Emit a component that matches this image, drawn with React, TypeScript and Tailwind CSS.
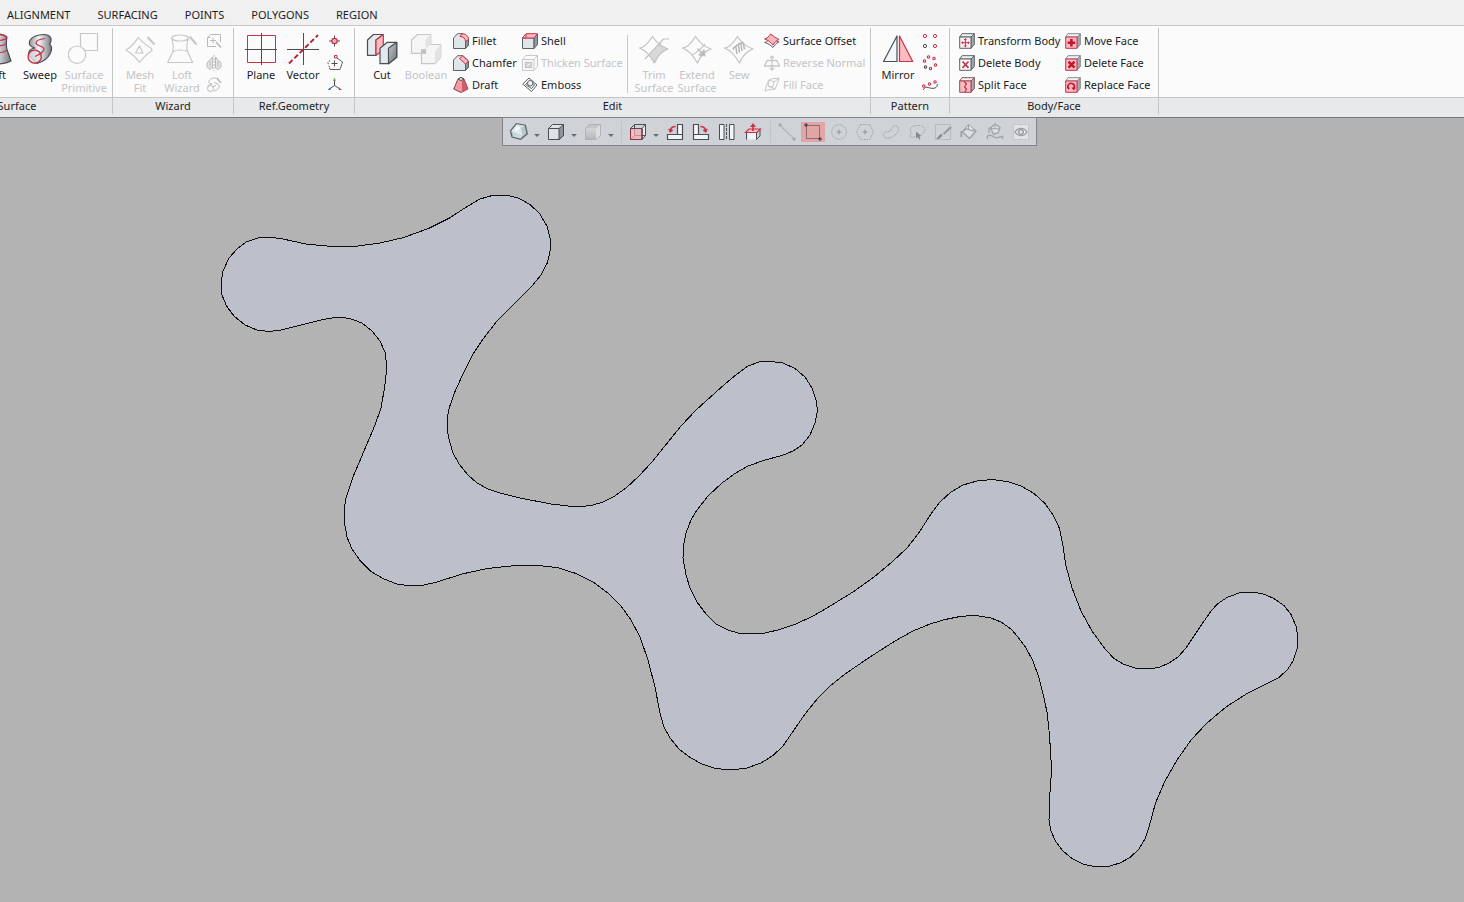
import type { ReactNode } from "react";

const DARK = "#4a4e54";
const SOFT = "#5c6167";
const RED = "#c9304a";
const PINK = "#fbbcc0";
const OFF = "#c6c7c9";

function Big({ children }: { children: ReactNode }) {
  return (
    <svg viewBox="0 0 32 32" className="h-8 w-8 shrink-0" fill="none" strokeWidth="1.2" strokeLinejoin="round" aria-hidden="true">
      <defs>
        <linearGradient id="steel" x1="0" x2="1">
          <stop offset="0" stopColor="#8b8f94" />
          <stop offset="0.45" stopColor="#f4f5f6" />
          <stop offset="1" stopColor="#777b80" />
        </linearGradient>
        <linearGradient id="side" x1="0" y1="0" x2="1" y2="1">
          <stop offset="0" stopColor="#c3cace" />
          <stop offset="1" stopColor="#6d767c" />
        </linearGradient>
      </defs>
      {children}
    </svg>
  );
}

function Small({ children }: { children: ReactNode }) {
  return (
    <svg viewBox="0 0 16 16" className="h-4 w-4 shrink-0" fill="none" strokeWidth="1" strokeLinejoin="round" aria-hidden="true">
      {children}
    </svg>
  );
}

function Tool({ children }: { children: ReactNode }) {
  return (
    <svg viewBox="0 0 20 20" className="h-5 w-5 shrink-0" fill="none" strokeWidth="1" aria-hidden="true">
      {children}
    </svg>
  );
}

/* Large ribbon icons */

const LoftIcon = () => (
  <Big>
    <path d="M6 4C8 10 6 15 5 18L1 28C8 32 24 32 31 28L27.5 18C26 14 26 9 27 4C22 0 11 0 6 4Z" fill="url(#steel)" stroke={DARK} />
    <ellipse cx="16.5" cy="4.5" rx="10" ry="3" stroke={RED} />
    <path d="M5.5 17C11 21 22 21 27 17M6 11C12 14 21 14 26.5 10.5" stroke={RED} />
  </Big>
);

const SweepIcon = () => (
  <Big>
    <path
      d="M4.5 22C4 17 8 15.500 11 15C7 14 4.500 12 5.500 8.500C7 4 14 1.500 20 1.500C25 1.500 27.500 4 27 7.500C27 9 26.500 10 25.500 11C28 13 28 17 26 21C23.500 26 18 29 13 30.500Z"
      fill="url(#steel)"
      stroke={DARK}
    />
    <circle cx="10.700" cy="23.700" r="6.600" fill="#dfe1e3" fillOpacity="0.800" stroke={RED} strokeWidth="1.400" />
    <path d="M11 23.500C16 21 20 19 20 16C20 13 12 13 12 10C12 7 17 6 21 5.500" stroke={RED} />
  </Big>
);

const PrimitiveIcon = () => (
  <Big>
    <g stroke={OFF} fill="#fbfbfb">
      <rect x="12.500" y="0.500" width="17" height="17" />
      <circle cx="9" cy="21.700" r="8.700" />
    </g>
  </Big>
);

const MeshFitIcon = () => (
  <Big>
    <g stroke={OFF}>
      <path d="M2 17C7 15 11 9 14.500 4.500C17 8 20 11 27.500 15.500L28 18C23 20 19 25 15.500 29.500C12 24 8 21 2 17Z" />
      <path d="M15.500 13L19 20H11.500Z" />
      <path d="M23.500 4L30.500 11.500" strokeWidth="2" />
    </g>
  </Big>
);

const LoftWizardIcon = () => (
  <Big>
    <g stroke={OFF}>
      <ellipse cx="14" cy="5" rx="8.300" ry="3" />
      <path d="M5.700 5C7.500 10 7.500 15 7 18.500L1.700 29.500H26.700L21.500 18.500C20.500 14 21 9 22.300 5M7 18.500C11 16.500 18 16.500 21.500 18.500" />
      <path d="M23.500 3.500L30.500 11.500" strokeWidth="2" />
    </g>
  </Big>
);

const PlaneIcon = () => (
  <Big>
    <g strokeWidth="1">
      <rect x="2.500" y="2.500" width="28" height="27" stroke={RED} />
      <path d="M16.500 0V32M0 16.500H32" stroke={DARK} />
    </g>
  </Big>
);

const VectorIcon = () => (
  <Big>
    <path d="M16.500 0V32M0 16.500H32" stroke={DARK} strokeWidth="1" />
    <path d="M2 30.500L31 2" stroke="#b52640" strokeWidth="1.900" strokeDasharray="5 2.500" />
  </Big>
);

const CutIcon = () => (
  <Big>
    <path d="M1.500 7L7.500 1.500H17.300L10 7V22.300H1.500Z" fill="#e4eaed" stroke={DARK} />
    <path d="M10 7L17.300 1.500V17L10 22.300Z" fill={PINK} stroke={RED} />
    <path d="M14 15.300L21.300 9.300H30.700V24.300L22.500 30.700H14Z" fill="#e1e9ed" stroke={DARK} />
    <path d="M22.500 15.300L30.700 9.300V24.300L22.500 30.700Z" fill="url(#side)" stroke={DARK} />
  </Big>
);

const BooleanIcon = () => (
  <Big>
    <g stroke={OFF}>
      <path d="M1.500 7L7.500 1.500H20.700V11.500H30.700V24L25 30.700H11.500V20.300H1.500Z" fill="#f5f5f6" />
      <path d="M15.500 7L20.700 1.500V11.500L15.500 16.500ZM25 18L30.700 11.500V24L25 30.700Z" fill="#e2e3e4" stroke="none" />
      <path d="M11.500 16.500h4v4h-4z" fill="#bfc0c2" />
    </g>
  </Big>
);

const SHEET = "M1.500 15C6 15 11 9 14.500 3.500C18 9 24 14 30 16C24 18 19 24 16.500 30C13 24 7 17 1.500 15Z";

const TrimIcon = () => (
  <Big>
    <g stroke="#c0c1c3">
      <path d={SHEET} />
      <path d="M7 26L25.500 6H31" />
      <path d="M12 21V24M14 19V27M16 17V30M18 15V27M20 12V24M22 10V21M24 13V19M26 13.500V18M28 15V17" />
    </g>
  </Big>
);

const ExtendIcon = () => (
  <Big>
    <g stroke="#c0c1c3">
      <path d={SHEET} />
      <path d="M24 11C20 16 15 20 11 22" />
      <path d="M16.500 15.500L22.500 21.500" strokeWidth="1.500" />
      <path d="M24 23L18 22L23 17Z" fill="#b9babc" />
    </g>
  </Big>
);

const SewIcon = () => (
  <Big>
    <g stroke="#c0c1c3">
      <path d={SHEET} />
      <path d="M10.500 17C10 14 12 13 13 15L14 21M13 15C12.500 12 14.500 11 15.500 13L16.500 19.500M15.500 13C15 10 17 9.500 18 12L19 18M18 12C17.500 9 19.500 8.500 20.500 11L21.500 16.500" stroke="#b4b5b7" strokeWidth="1.500" />
    </g>
  </Big>
);

const MirrorIcon = () => (
  <Big>
    <path d="M1.500 28.500L15 3V28.500Z" fill="#f1f8f9" stroke={DARK} />
    <path d="M17.500 3V28.500H30.700Z" fill={PINK} stroke={RED} />
  </Big>
);

/* Small ribbon icons */

const MeshToolIcon = () => (
  <Small>
    <g stroke="#b9babc">
      <path d="M14.500 9V1.500H4.500L1.500 4.500V13.500H10M1.500 4.500H4.500M7 5V10.500M4 7.500H10" />
      <path d="M10 9L15 14.500" strokeWidth="1.700" />
    </g>
  </Small>
);

const SymmetryIcon = () => (
  <Small>
    <g stroke="#b9babc">
      <path d="M8 0V16" strokeDasharray="2 1" />
      <path d="M6.500 2V13L4 14.500L1 12V8ZM9.500 2V13L12 14.500L15 12V8ZM4 6V12M12 6V12" fill="#e6e6e7" />
    </g>
  </Small>
);

const PipeIcon = () => (
  <Small>
    <g stroke="#b9babc">
      <circle cx="4.500" cy="11.500" r="3" />
      <path d="M1.500 10C3 7 5 7.500 6 7C3 6.500 2 5 3.500 3C6 1 10 0 11 2L13 4M7.500 14C12 13 15 10 12 7L8 5.500M6 10L10 8.500" />
      <path d="M11 1L15 6" strokeWidth="1.500" />
    </g>
  </Small>
);

const PointIcon = () => (
  <Small>
    <path d="M7.500 2.500V13.500M2 8H13" stroke={DARK} />
    <circle cx="7.500" cy="8" r="2.700" fill="#f7aeb4" stroke={RED} strokeWidth="1.200" />
  </Small>
);

const PolygonIcon = () => (
  <Small>
    <path d="M7.500 5.500V11.500M4.500 8.500H10.500" stroke={DARK} />
    <path d="M10 3L15.500 7L13 14.500H3L2.500 13" stroke={SOFT} />
    <path d="M2.500 12.500L0.700 7L3 5.500" stroke={SOFT} strokeDasharray="2 1.500" />
    <rect x="7.500" y="0.500" width="2.500" height="2.500" fill="#fff" stroke={RED} />
  </Small>
);

const AxesIcon = () => (
  <Small>
    <path d="M7.500 3V8.500L2.500 12M7.500 8.500L13 12" stroke={DARK} />
    <path d="M7.500 0.500L9 4H6Z" fill="#6cae35" />
    <path d="M0.500 13L3.500 10.500V13Z" fill="#2769ac" />
    <path d="M15 13L12 10.500V13Z" fill={RED} />
  </Small>
);

const FilletIcon = () => (
  <Small>
    <path d="M0.500 5L4.500 0.700H10L15.500 6V12L12.500 15.500H0.500Z" fill="#dfe5e9" stroke={SOFT} />
    <path d="M12.500 9L15.500 6V12L12.500 15.500Z" fill="#8f989e" stroke={SOFT} />
    <path d="M7 3.500L9 0.700C13 1 15.500 3 15.500 6.500L12.500 8.500C12.500 5.500 10.500 3.700 7 3.500Z" fill={PINK} stroke={RED} />
  </Small>
);

const ChamferIcon = () => (
  <Small>
    <path d="M0.500 5L4.500 0.700H10L15.500 6V12L12.500 15.500H0.500Z" fill="#dfe5e9" stroke={SOFT} />
    <path d="M12.500 9L15.500 6V12L12.500 15.500Z" fill="#8f989e" stroke={SOFT} />
    <path d="M6.500 3.500L9.500 1L15.500 6L12.500 9Z" fill={PINK} stroke={RED} />
  </Small>
);

const DraftIcon = () => (
  <Small>
    <path d="M5 2L0.700 12L8 15.500L15 12L11 2L8 0.500Z" fill="#f19ca2" stroke="#8e3b47" />
    <path d="M9 4V15L15 12L11 2Z" fill="#cf5c68" />
    <path d="M5 2L8 0.500L11 2L8 3.500Z" fill="#fff" stroke={DARK} />
  </Small>
);

const ShellIcon = () => (
  <Small>
    <path d="M0.500 5H12V15.500H0.500Z" fill="#dfe5e9" stroke={SOFT} />
    <path d="M12 5L15.500 1V11.500L12 15.500Z" fill="#8f989e" stroke={SOFT} />
    <path d="M0.500 5L4 0.700H15.500L12 5Z" fill={PINK} stroke={RED} />
    <path d="M4 1V4.500" stroke={RED} />
  </Small>
);

const ThickenIcon = () => (
  <Small>
    <g stroke={OFF}>
      <path d="M0.500 4.500L4 0.500H15.500V11.500L12 15.500H0.500ZM0.500 4.500H12V15.500M12 4.500L15.500 0.500" />
      <path d="M3.500 7.500h6v5h-6z" fill="#d2d3d5" strokeWidth="1.500" />
      <path d="M5 11L8 8.500" stroke="#fff" />
    </g>
  </Small>
);

const EmbossIcon = () => (
  <Small>
    <path d="M0.700 7L7 1L15 8L9.500 14.500Z" stroke={SOFT} />
    <path d="M3.500 7.500L6 5M11 6L12.500 8L9.500 11.500L3.500 7.500" stroke={SOFT} />
    <circle cx="8.200" cy="6.200" r="2.700" fill="#f4f4f5" stroke={SOFT} />
  </Small>
);

const OffsetIcon = () => (
  <Small>
    <path d="M0.700 9.500C4 8.500 5 6 6.500 4C9 6 12 8 15 9C12 10 11 12 9 14.500C7 12.500 4 10.500 0.700 9.500Z" fill="#f0f0f0" stroke={SOFT} />
    <path d="M0.700 6C4 5 5 3 6.500 1C9 3 12 5 15 6.500C12 7.500 11 9 9 12C7 9.500 4 7 0.700 6Z" fill="#f7b5bb" stroke={RED} />
  </Small>
);

const ReverseIcon = () => (
  <Small>
    <g stroke={OFF} strokeWidth="1.300">
      <path d="M3 5.500H13L15.500 11H0.500ZM8 1V15" />
      <path d="M6 3L8 1L10 3M6 13L8 15L10 13" />
    </g>
  </Small>
);

const FillIcon = () => (
  <Small>
    <g stroke={OFF}>
      <path d="M1 14C2 9 3 6 5 3C8 1 12 2 15 1C14 5 13 8 11 12C8 13 4 12 1 14ZM5 3L4 9L11 12M5 3L10 5L15 1M10 5L9 10L4 9" />
    </g>
  </Small>
);

const GridIcon = () => (
  <Small>
    <g stroke={RED}>
      <circle cx="3" cy="3" r="1.600" />
      <circle cx="13" cy="3" r="1.600" />
      <circle cx="13" cy="13" r="1.600" />
      <circle cx="3" cy="13" r="1.600" stroke={DARK} />
    </g>
  </Small>
);

const CircularIcon = () => (
  <Small>
    <g stroke={RED} strokeWidth="1.100">
      <circle cx="6.500" cy="2" r="1.200" />
      <circle cx="12" cy="3.500" r="1.200" />
      <circle cx="2.500" cy="6" r="1.200" />
      <circle cx="13.500" cy="10" r="1.200" />
      <circle cx="8.500" cy="13.500" r="1.200" />
      <circle cx="3.500" cy="12" r="1.200" stroke={DARK} />
    </g>
  </Small>
);

const CurveIcon = () => (
  <Small>
    <path d="M1 13C4 7 8 13 13 11C15 10 15 9 15.500 7" stroke={DARK} />
    <g stroke={RED} strokeWidth="1.100" fill="#fff">
      <circle cx="1.800" cy="9" r="1.200" />
      <circle cx="7.500" cy="7" r="1.200" />
      <circle cx="13" cy="5" r="1.200" />
    </g>
  </Small>
);

function Cube({ face, edge, stroke, children }: { face: string; edge: string; stroke: string; children: ReactNode }) {
  return (
    <Small>
      <path d="M0.700 4L3 0.700H15.300L12 4Z" fill="#f4f5f6" stroke={edge} />
      <path d="M12 4L15.300 0.700V11.500L12 15.300Z" fill="#a4aaae" stroke={edge} />
      <path d="M0.700 4H12V15.300H0.700Z" fill={face} stroke={stroke} />
      {children}
    </Small>
  );
}

const TransformBodyIcon = () => (
  <Cube face="#f7eef0" edge={SOFT} stroke={SOFT}>
    <path d="M6.400 6.500V13M3.200 9.700H9.700" stroke={RED} />
    <path d="M6.400 5L8 7H4.800ZM6.400 14.400L8 12.500H4.800ZM2 9.700L4 8.200V11.200ZM10.900 9.700L9 8.200V11.200Z" fill={RED} />
  </Cube>
);
const DeleteBodyIcon = () => (
  <Cube face="#fbfbfb" edge={SOFT} stroke={SOFT}>
    <path d="M3.500 6.500L9.500 12.800M9.500 6.500L3.500 12.800" stroke={RED} strokeWidth="1.700" />
  </Cube>
);
const SplitFaceIcon = () => (
  <Cube face={PINK} edge="#8c5159" stroke="#9c4652">
    <path d="M5 4.500L7.500 7L5.500 10L7.500 12L6 15" stroke={RED} strokeWidth="1.200" />
  </Cube>
);
const MoveFaceIcon = () => (
  <Cube face={PINK} edge="#85898d" stroke={RED}>
    <path d="M6.400 6V13.500M2.600 9.700H10.200" stroke="#c4142f" strokeWidth="2.600" />
  </Cube>
);
const DeleteFaceIcon = () => (
  <Cube face={PINK} edge="#85898d" stroke={RED}>
    <path d="M3.500 6.700L9.500 12.700M9.500 6.700L3.500 12.700" stroke="#c4142f" strokeWidth="2.600" />
  </Cube>
);
const ReplaceFaceIcon = () => (
  <Cube face={PINK} edge="#85898d" stroke={RED}>
    <path d="M4.300 12.200A3.200 3.200 0 1 1 9 11" stroke="#c4142f" strokeWidth="1.600" />
    <path d="M6.500 10.500H11L8.700 13.500Z" fill="#c4142f" />
  </Cube>
);

/* Viewport toolbar icons */

const ShadeIcon = () => (
  <Tool>
    <path d="M1.500 9L7.300 1.700L16.300 3.300L18.300 11.700L11.700 17.300L3 15Z" fill="#b4c6cc" stroke={SOFT} strokeWidth="1.300" />
    <path d="M7.300 2.500L5 11L12 6Z" fill="#f7fafa" />
    <path d="M5 11L12 6L13.500 13.500Z" fill="#dfe9ec" />
    <path d="M7.500 2.300L12 6L16 3.800Z" fill="#d5e2e6" />
    <path d="M5 11L13.500 13.500L11.500 16.500L3.500 14.500Z" fill="#c9d8dd" />
    <path d="M2.200 9.200L7 3L5 11Z" fill="#dde8eb" />
  </Tool>
);
const CubeViewIcon = () => (
  <Tool>
    <path d="M2.500 6.500L6.500 2.500H17.500V13.500L13 17.500H2.500Z" fill="#dfe3e6" stroke={DARK} />
    <path d="M13 6.500L17.500 2.500V13.500L13 17.500Z" fill="#8d959b" stroke={DARK} />
    <path d="M2.500 6.500H13" stroke={DARK} />
  </Tool>
);
const FadedCubeIcon = () => (
  <Tool>
    <defs>
      <linearGradient id="fade" x1="0" y1="0" x2="0" y2="1">
        <stop offset="0" stopColor="#d3d5d7" />
        <stop offset="1" stopColor="#b1b3b6" />
      </linearGradient>
    </defs>
    <path d="M2 6.500L6 2.500H18L13 6.500Z" fill="#c3c5c8" />
    <path d="M2 6.500H13V18H2Z" fill="url(#fade)" />
    <path d="M13 6.500L18 2.500V13.500L13 18Z" fill="#dcdddf" />
    <path d="M2.500 6.500L6.500 2.500H17.500V13.500L13 17.500H2.500Z" stroke="#b0b2b5" />
  </Tool>
);
const WireCubeIcon = () => (
  <Tool>
    <path d="M6.500 2.500H17.500V13.500L14 17.500V6.500L17.500 2.500M6.500 2.500L2.500 6.500M6.500 2.500V13.500L2.500 17.500M6.500 13.500H17.500" fill="#eef0f1" stroke={DARK} />
    <path d="M2.500 6.500H14V17.500H2.500Z" fill="#f6aeb3" fillOpacity="0.700" stroke="#8c3440" />
    <path d="M2.500 6.500H14V17.500" stroke={DARK} />
  </Tool>
);
const RotateLeftIcon = () => (
  <Tool>
    <path d="M12.500 2.500H17.500V12.500H12.500ZM2.500 12.500H17.500V17.500H2.500Z" fill="#f2f5f6" stroke={DARK} strokeWidth="1.200" />
    <path d="M10.500 4.500C7.500 4.500 6 6 5.500 8" stroke={RED} strokeWidth="1.600" />
    <path d="M3 6.500L8.500 8L5 11Z" fill={RED} />
  </Tool>
);
const RotateRightIcon = () => (
  <Tool>
    <path d="M2.500 2.500H7.500V12.500H2.500ZM2.500 12.500H17.500V17.500H2.500Z" fill="#f2f5f6" stroke={DARK} strokeWidth="1.200" />
    <path d="M9.500 4.500C12.500 4.500 14 6 14.500 8" stroke={RED} strokeWidth="1.600" />
    <path d="M17 6.500L11.500 8L15 11Z" fill={RED} />
  </Tool>
);
const FlipIcon = () => (
  <Tool>
    <path d="M2.500 2.500H7V17.500H2.500ZM12.500 2.500H17V17.500H12.500Z" fill="#f2f5f6" stroke={DARK} />
    <path d="M9.500 2V18" stroke={DARK} strokeDasharray="3 1" />
  </Tool>
);
const NormalViewIcon = () => (
  <Tool>
    <path d="M4.500 10H13.500V17.500H4.500Z" fill="#f2f5f6" />
    <path d="M3.500 10V17.500M13.500 10V17.500M17 8V14L13.500 17.500" stroke={DARK} />
    <path d="M2.500 10.500L6 7H17.500L14 10.500Z" fill="#f4c0c4" stroke={RED} strokeWidth="1.200" />
    <path d="M10 3V9" stroke={RED} strokeWidth="1.600" />
    <path d="M10 1L13 5H7Z" fill={RED} />
  </Tool>
);

const GREY = "#9ea2a6";
const LineSelectIcon = () => (
  <Tool>
    <path d="M4 4L16 16" stroke={GREY} strokeWidth="1.200" strokeDasharray="1.500 1" />
    <path d="M2 2h2v2H2zM16 16h2v2h-2z" stroke={GREY} />
  </Tool>
);
const RectSelectIcon = () => (
  <Tool>
    <path d="M3.500 3.500H16.500V16.500H3.500Z" stroke="#34373b" strokeDasharray="1 1" />
    <path d="M2 2h2v2H2zM16 16h2v2h-2z" stroke="#34373b" />
  </Tool>
);
const CircleSelectIcon = () => (
  <Tool>
    <circle cx="10" cy="10" r="7.300" stroke={GREY} strokeDasharray="1.500 1" />
    <path d="M10 7.500V12.500M7.500 10H12.500" stroke="#8f9397" />
  </Tool>
);
const PolySelectIcon = () => (
  <Tool>
    <path d="M5.500 2.500H14.500L18.500 10L14.500 17.500H5.500L1.500 10Z" stroke={GREY} strokeDasharray="1.500 1" />
    <path d="M10 7.500V12.500M7.500 10H12.500" stroke="#8f9397" />
  </Tool>
);
const FreeSelectIcon = () => (
  <Tool>
    <path d="M10 8C10 5 13 3 16 4C20 7 16 13 10 15.500C5 17.500 1 15 2.500 11.500C4 8.500 8 11 10 8Z" stroke={GREY} strokeDasharray="1.500 1" />
  </Tool>
);
const SmartSelectIcon = () => (
  <Tool>
    <path d="M8 14.500C4 17 1 14 4.500 11C1 6 6 3 12 3.500C19 4 20 10 14 13" stroke={GREY} strokeDasharray="1.500 1" />
    <path d="M9 9.500L14.500 14L12.500 14.500L13.500 17L12 17.500L11 15L9 16.500Z" fill="#86898d" />
  </Tool>
);
const BrushIcon = () => (
  <Tool>
    <path d="M2.500 2.500H17.500V17.500H2.500Z" stroke={GREY} strokeDasharray="1 1" />
    <path d="M18 5L10.500 12" stroke="#979b9f" strokeWidth="2.200" />
    <path d="M9.500 12C9 16 6 17.500 3 17C5.500 15.500 5.500 12 9.500 12Z" fill="#85898d" />
  </Tool>
);
const BucketIcon = () => (
  <Tool>
    <path d="M3.500 10L9.500 3L17 9L10.500 16.500Z" fill="#dcdee1" stroke={GREY} strokeWidth="1.300" />
    <path d="M7 6.500L9.500 3L14 7Z" fill="#eceef0" />
    <path d="M4 9.500L7 7L16.500 9.500M9.500 3V8" stroke={GREY} strokeWidth="1.200" />
    <path d="M2.300 9V15" stroke={GREY} strokeWidth="1.800" />
  </Tool>
);
const FillSurfaceIcon = () => (
  <Tool>
    <path d="M5.500 6L10 2L15 5.500L13 11L8.500 12Z" fill="#dfe1e3" stroke={GREY} strokeWidth="1.300" />
    <path d="M5 6.500L14.500 7M10 2.500V7" stroke={GREY} />
    <path d="M2.500 17V14C6 12 8 14.500 10 15.500C12.500 17 15 14 17.500 14.500V17M4 5.500V11" stroke={GREY} strokeWidth="1.300" />
  </Tool>
);
const EyeIcon = () => (
  <Tool>
    <path d="M2.500 2.500H17.500V17.500H2.500Z" fill="#e1e3e5" stroke="#adb0b4" strokeDasharray="1 1" />
    <path d="M4 10C7 5 13 5 16 10C13 15 7 15 4 10Z" stroke="#94989c" strokeWidth="1.200" />
    <circle cx="10" cy="10" r="2.300" stroke="#94989c" strokeWidth="1.300" />
  </Tool>
);

/* Ribbon parts */

function BigButton({ icon, lines, disabled, wide }: { icon: ReactNode; lines: string[]; disabled?: boolean; wide?: boolean }) {
  return (
    <button
      type="button"
      disabled={disabled}
      className={`${wide ? "w-11" : "w-[42px]"} flex shrink-0 flex-col items-center gap-[3px] pt-[3px] leading-[13px] disabled:text-[#c3c4c6]`}
    >
      {icon}
      <span className="flex flex-col items-center whitespace-nowrap">
        {lines.map((line) => (
          <span key={line}>{line}</span>
        ))}
      </span>
    </button>
  );
}

function SmallButton({ icon, label, disabled }: { icon: ReactNode; label: string; disabled?: boolean }) {
  return (
    <button type="button" disabled={disabled} className="flex h-[22px] items-center gap-[3px] whitespace-nowrap disabled:text-[#c3c4c6]">
      {icon}
      {label}
    </button>
  );
}

function IconColumn({ items, disabled }: { items: [string, ReactNode][]; disabled?: boolean }) {
  return (
    <div className="flex w-[22px] shrink-0 flex-col">
      {items.map(([name, icon]) => (
        <button key={name} type="button" aria-label={name} disabled={disabled} className="flex h-[22px] items-center justify-center">
          {icon}
        </button>
      ))}
    </div>
  );
}

function Group({ label, className, children }: { label: string; className: string; children: ReactNode }) {
  return (
    <section aria-label={label} className={`${className} flex shrink-0 flex-col border-r border-[#c3c5c7]`}>
      <div className="flex h-[70px] pt-[2px]">{children}</div>
      <h2 className="flex h-4 items-center justify-center">{label}</h2>
    </section>
  );
}

function DropTool({ name, icon, className }: { name: string; icon: ReactNode; className: string }) {
  return (
    <div className={`${className} flex items-center gap-[5px]`}>
      <button type="button" aria-label={name}>
        {icon}
      </button>
      <button type="button" aria-label={`${name} options`} className="pt-2">
        <svg viewBox="0 0 6 3" className="h-[3px] w-[6px]" aria-hidden="true">
          <path d="M0 0H6L3 3Z" fill="#6a6e73" />
        </svg>
      </button>
    </div>
  );
}

function ToolButton({ name, icon, active }: { name: string; icon: ReactNode; active?: boolean }) {
  return (
    <button type="button" aria-label={name} aria-pressed={active} className="flex w-[26px] items-center justify-center">
      <span className={`${active ? "bg-[#e2a5a5]" : ""} flex w-6 justify-center`}>{icon}</span>
    </button>
  );
}

const OUTLINE =
  "269,237 281.5,238.7 306,244 330,246.3 356,246.3 380,243 403,237.7 428,228.7 449,218.3 468,206 480,199 494,195 506,195 519,198.3 530,204.5 539.5,213.5 547,226 550.5,240 550.5,249 547.5,262.5 541,275 532,286 497,321 483,339 473,354 463,374 454.5,392.5 449.5,407 447.5,417 447.5,432 450,443 453,453 459,464 468,475 477,483 488,489 500,493 520,498 551,504 568,506 582,506.5 593,505 603,502 614,496.5 626,488 639,476 652,462 681,426 696,410 725,384 737,374 748,366 759,362 770,361.3 783,363 795,368.5 805,377 812,388 816,400 817.5,411 815,423 810,435 802,445 793,451 782,455.5 765,460 748,466 735,473.5 722,483 708,496 697,510 691,520 686,533 683.5,546 683,558 686,575 690,588 697,602 706,614 716,624 728,630 738,633 750,634 765,633 780,629.5 796,624 812,616.5 827,608 853,592 874,577 892,562 907,548 918,534 931,514 940,502 951,492 963,485 977,481 992,479.5 1007,481.5 1021,486 1034,493.5 1045,503.5 1053,515 1059.5,528.5 1062.5,543 1066,566 1072,588 1081,611 1092,631 1105,649 1114,658.5 1124,664.5 1135,668 1147,669 1159,667.5 1169,663 1178,657 1186,648 1198,630 1211,611 1218,603.5 1227,597.5 1239,593 1250,592 1262,593.5 1273,598 1284,605.5 1291,614.5 1296,626 1298,638 1297,649 1293.5,660 1288,669 1279,677.5 1263,685.5 1247,693.5 1226,707 1207,723 1191,740 1177,760 1165,781 1155.5,803 1149,827 1145,839 1139,849 1130,857.5 1120,863 1108,866.5 1096,866.7 1084,864.5 1072,858.5 1063,851 1056,842 1051,831 1049,820 1049.5,800 1051,778 1051,760 1049.5,735 1047,712 1043.5,696 1039,678 1033,661 1026,648 1018,637 1011,629 1001,622 991,618 975,615.3 960,616.5 945,619.5 930,624 913,631 895,641 870,657 845,674 830,686 818,698 805,714 783,746 773,755.5 761,763 747,768 731,770 716,768.5 703,764.5 690,757.5 679,749 670,738 664,727 660,713 655,687 648,660 640,637 631,620 621,606 608,593 593,582 576,573.5 557,567.5 538,565.5 516,565.5 487,568.5 462,574 437,582 424,585 411,586 397,584 384,579 371,571.5 360,560.5 352,549 347,537 344.5,523 344,511 346,498 353,477 375,425 381,408 384.5,388 387,367 385,352 380,341 372,331 362,323 350,318.5 338,317 323,319.5 281,330 269,331.5 257,330 245,325 234,316 226.5,306 222,295 221,284 223,271 229,258 237,249 246,242 258,238";

export default function App() {
  return (
    <div className="flex min-h-screen flex-col overflow-hidden bg-[#b3b3b3] font-['Noto_Sans',sans-serif] text-[11px] text-[#1c1d1f]">
      <nav className="flex h-[26px] items-center gap-[27px] border-b border-[#c8c9cb] bg-[#f0f0f0] pt-[6px] pl-[7px]">
        <button type="button">ALIGNMENT</button>
        <button type="button">SURFACING</button>
        <button type="button">POINTS</button>
        <button type="button">POLYGONS</button>
        <button type="button">REGION</button>
      </nav>

      <header className="flex h-[92px] overflow-hidden border-b border-[#75787b] bg-[linear-gradient(#fbfbfb_71px,#c3c5c7_71px,#c3c5c7_72px,#e7e9eb_72px)] pt-[2px] pb-[3px]">
        <Group label="Surface" className="-ml-[78px] w-[191px]">
          <div className="flex flex-1 justify-end pr-[6px]">
            <BigButton wide icon={<LoftIcon />} lines={["Loft"]} />
            <BigButton wide icon={<SweepIcon />} lines={["Sweep"]} />
            <BigButton wide disabled icon={<PrimitiveIcon />} lines={["Surface", "Primitive"]} />
          </div>
        </Group>

        <Group label="Wizard" className="w-[121px]">
          <div className="flex pl-[6px]">
            <BigButton disabled icon={<MeshFitIcon />} lines={["Mesh", "Fit"]} />
            <BigButton disabled icon={<LoftWizardIcon />} lines={["Loft", "Wizard"]} />
            <IconColumn
              disabled
              items={[
                ["Mesh tool", <MeshToolIcon />],
                ["Symmetry", <SymmetryIcon />],
                ["Pipe", <PipeIcon />],
              ]}
            />
          </div>
        </Group>

        <Group label="Ref.Geometry" className="w-[121px]">
          <div className="flex pl-[6px]">
            <BigButton icon={<PlaneIcon />} lines={["Plane"]} />
            <BigButton icon={<VectorIcon />} lines={["Vector"]} />
            <IconColumn
              items={[
                ["Point", <PointIcon />],
                ["Polyline", <PolygonIcon />],
                ["Coordinate", <AxesIcon />],
              ]}
            />
          </div>
        </Group>

        <Group label="Edit" className="w-[516px]">
          <div className="flex pl-[5px]">
            <BigButton wide icon={<CutIcon />} lines={["Cut"]} />
            <BigButton wide disabled icon={<BooleanIcon />} lines={["Boolean"]} />
            <div className="flex w-[74px] flex-col pl-[5px]">
              <SmallButton icon={<FilletIcon />} label="Fillet" />
              <SmallButton icon={<ChamferIcon />} label="Chamfer" />
              <SmallButton icon={<DraftIcon />} label="Draft" />
            </div>
            <div className="flex w-[105px] flex-col">
              <SmallButton icon={<ShellIcon />} label="Shell" />
              <SmallButton disabled icon={<ThickenIcon />} label="Thicken Surface" />
              <SmallButton icon={<EmbossIcon />} label="Emboss" />
            </div>
            <div className="my-[5px] mr-1 w-px bg-[#c8c9cb]" />
            <BigButton wide disabled icon={<TrimIcon />} lines={["Trim", "Surface"]} />
            <BigButton disabled icon={<ExtendIcon />} lines={["Extend", "Surface"]} />
            <BigButton disabled icon={<SewIcon />} lines={["Sew"]} />
            <div className="flex flex-col pl-1">
              <SmallButton icon={<OffsetIcon />} label="Surface Offset" />
              <SmallButton disabled icon={<ReverseIcon />} label="Reverse Normal" />
              <SmallButton disabled icon={<FillIcon />} label="Fill Face" />
            </div>
          </div>
        </Group>

        <Group label="Pattern" className="w-[79px]">
          <div className="flex pl-[6px]">
            <BigButton icon={<MirrorIcon />} lines={["Mirror"]} />
            <IconColumn
              items={[
                ["Linear pattern", <GridIcon />],
                ["Circular pattern", <CircularIcon />],
                ["Curve pattern", <CurveIcon />],
              ]}
            />
          </div>
        </Group>

        <Group label="Body/Face" className="w-[209px]">
          <div className="flex pl-[9px]">
            <div className="flex w-[106px] flex-col">
              <SmallButton icon={<TransformBodyIcon />} label="Transform Body" />
              <SmallButton icon={<DeleteBodyIcon />} label="Delete Body" />
              <SmallButton icon={<SplitFaceIcon />} label="Split Face" />
            </div>
            <div className="flex flex-col">
              <SmallButton icon={<MoveFaceIcon />} label="Move Face" />
              <SmallButton icon={<DeleteFaceIcon />} label="Delete Face" />
              <SmallButton icon={<ReplaceFaceIcon />} label="Replace Face" />
            </div>
          </div>
        </Group>
      </header>

      <main className="relative flex-1">
        <svg viewBox="0 118 1464 784" className="block w-full" role="img" aria-label="Sketch body">
          <polygon points={OUTLINE} fill="#bdbfcb" stroke="#0c0c0e" strokeWidth="1" shapeRendering="crispEdges" />
        </svg>

        <div role="toolbar" aria-label="View" className="absolute -top-px left-[502px] flex h-[29px] items-center border border-[#808388] bg-[#cfd2d7] pr-[2px] pl-[6px]">
          <DropTool name="Shading" icon={<ShadeIcon />} className="w-[37px]" />
          <DropTool name="Body display" icon={<CubeViewIcon />} className="w-[37px]" />
          <DropTool name="Surface display" icon={<FadedCubeIcon />} className="w-[37px]" />
          <div className="mr-[6px] ml-px h-[22px] w-px bg-[#c1c4c9]" />
          <DropTool name="Viewpoint" icon={<WireCubeIcon />} className="w-[34px]" />
          <ToolButton name="Rotate left" icon={<RotateLeftIcon />} />
          <ToolButton name="Rotate right" icon={<RotateRightIcon />} />
          <ToolButton name="Flip view" icon={<FlipIcon />} />
          <ToolButton name="Normal view" icon={<NormalViewIcon />} />
          <div className="mr-[3px] ml-1 h-[22px] w-px bg-[#c1c4c9]" />
          <ToolButton name="Line selection" icon={<LineSelectIcon />} />
          <ToolButton name="Rectangle selection" icon={<RectSelectIcon />} active />
          <ToolButton name="Circle selection" icon={<CircleSelectIcon />} />
          <ToolButton name="Polygon selection" icon={<PolySelectIcon />} />
          <ToolButton name="Freehand selection" icon={<FreeSelectIcon />} />
          <ToolButton name="Custom selection" icon={<SmartSelectIcon />} />
          <ToolButton name="Paint selection" icon={<BrushIcon />} />
          <ToolButton name="Flood fill selection" icon={<BucketIcon />} />
          <ToolButton name="Extend selection" icon={<FillSurfaceIcon />} />
          <ToolButton name="Visible only" icon={<EyeIcon />} />
        </div>
      </main>
    </div>
  );
}
